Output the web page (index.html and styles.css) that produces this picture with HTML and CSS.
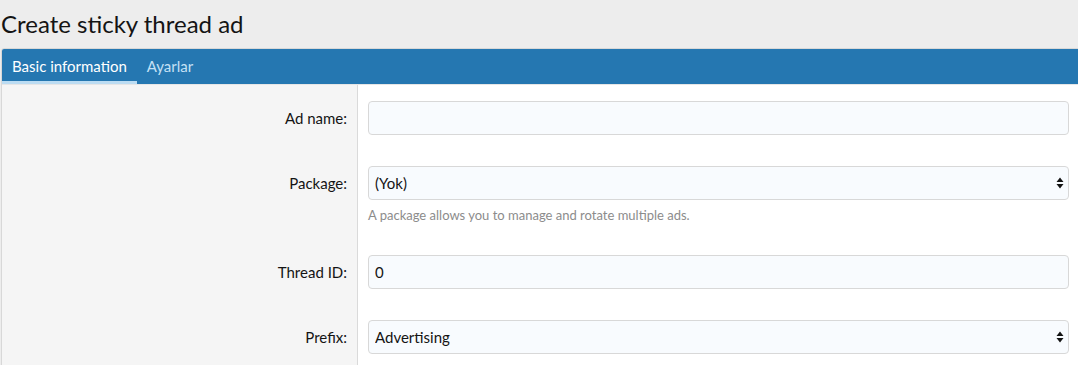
FILE: index.html
```html
<!DOCTYPE html>
<html lang="en">
<head>
    <meta charset="UTF-8">
    <meta name="viewport" content="width=device-width, initial-scale=1.0">
    <title>Create sticky thread ad</title>
    <link rel="stylesheet" href="styles.css">
</head>
<body>
    <h1 class="page-title">Create sticky thread ad</h1>

    <div class="block">
        <div class="tabs">
            <a class="tab active" href="#">Basic information</a>
            <a class="tab" href="#">Ayarlar</a>
        </div>

        <div class="form">
            <div class="row">
                <label class="row-label" for="ad-name">Ad name:</label>
                <div class="row-input">
                    <input class="input" id="ad-name" type="text">
                </div>
            </div>

            <div class="row">
                <label class="row-label" for="package">Package:</label>
                <div class="row-input">
                    <div class="select-wrap">
                        <select class="input select" id="package">
                            <option>(Yok)</option>
                        </select>
                        <svg class="select-arrow" width="8" height="12" viewBox="0 0 8 12"><path d="M4 0.5L7.5 5H0.5Z M4 11.5L0.5 7H7.5Z" fill="#141414"/></svg>
                    </div>
                    <div class="hint">A package allows you to manage and rotate multiple ads.</div>
                </div>
            </div>

            <div class="row">
                <label class="row-label" for="thread-id">Thread ID:</label>
                <div class="row-input">
                    <input class="input" id="thread-id" type="text" value="0">
                </div>
            </div>

            <div class="row">
                <label class="row-label" for="prefix">Prefix:</label>
                <div class="row-input">
                    <div class="select-wrap">
                        <select class="input select" id="prefix">
                            <option>Advertising</option>
                        </select>
                        <svg class="select-arrow" width="8" height="12" viewBox="0 0 8 12"><path d="M4 0.5L7.5 5H0.5Z M4 11.5L0.5 7H7.5Z" fill="#141414"/></svg>
                    </div>
                </div>
            </div>
        </div>
    </div>
</body>
</html>
```

FILE: styles.css
```css
html, body {
    overflow: hidden;
}
body {
    margin: 0;
    background: #ededed;
    color: #141414;
    font-family: Lato, "Noto Sans", sans-serif;
    font-size: 15px;
}
.page-title {
    margin: 0;
    padding: 6px 0 0 1px;
    height: 42px;
    font-size: 24px;
    font-weight: 400;
    line-height: 36px;
}
.block {
    width: calc(100% + 20px);
    margin-left: 1px;
    border: 1px solid #d8d8d8;
    border-radius: 3px;
    overflow: hidden;
    background: #fff;
}
.tabs {
    display: flex;
    background: #2577b1;
    height: 35px;
}
.tab {
    display: flex;
    align-items: center;
    padding: 0 10px;
    color: #c4e0f5;
    text-decoration: none;
    border-bottom: 3px solid transparent;
    padding-top: 2px;
}
.tab.active {
    color: #fff;
    border-bottom-color: #bcdcf2;
}
.form {
    border-top: 1px solid #e6e6e6;
    background: linear-gradient(to right, #f5f5f5 355px, #dadada 355px, #dadada 356px, #fff 356px);
}
.row {
    display: flex;
    padding: 16px 0 15px;
}
.row-label {
    width: 345px;
    flex: none;
    padding-right: 11px;
    text-align: right;
    line-height: 34px;
}
.row-input {
    padding-left: 10px;
    width: 701px;
}
.input {
    box-sizing: border-box;
    display: block;
    width: 100%;
    height: 34px;
    margin: 0;
    padding: 0 6px;
    border: 1px solid #d8d8d8;
    border-radius: 4px;
    background: #f8fbfe;
    color: #141414;
    font-family: inherit;
    font-size: 15px;
}
.select {
    appearance: none;
    -webkit-appearance: none;
}
.select-wrap {
    position: relative;
}
.select-arrow {
    position: absolute;
    right: 5px;
    top: 11px;
    pointer-events: none;
}
.hint {
    margin-top: 7px;
    color: #8c8c8c;
    font-size: 13px;
    line-height: 17px;
}
```
